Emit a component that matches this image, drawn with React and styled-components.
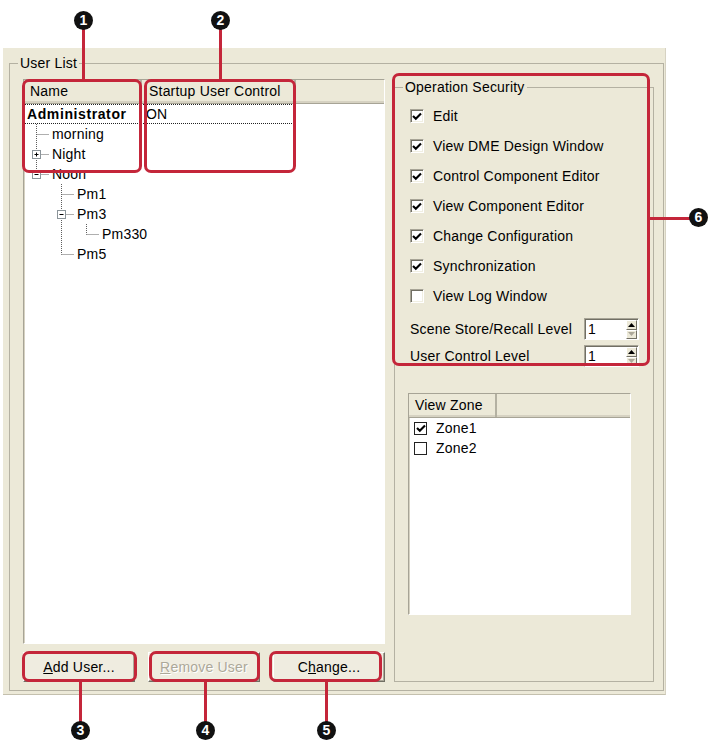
import React from "react";
import styled, { createGlobalStyle, css } from "styled-components";

const users = [
  { name: "Administrator", bold: true, startup: "ON", guides: [], focused: true },
  { name: "morning", guides: ["tee"] },
  { name: "Night", guides: ["tee"], expander: "plus" },
  { name: "Noon", guides: ["elbow"], expander: "minus" },
  { name: "Pm1", guides: ["blank", "tee"] },
  { name: "Pm3", guides: ["blank", "tee"], expander: "minus" },
  { name: "Pm330", guides: ["blank", "pipe", "elbow"] },
  { name: "Pm5", guides: ["blank", "elbow"] },
];

const permissions = [
  { label: "Edit", checked: true },
  { label: "View DME Design Window", checked: true },
  { label: "Control Component Editor", checked: true },
  { label: "View Component Editor", checked: true },
  { label: "Change Configuration", checked: true },
  { label: "Synchronization", checked: true },
  { label: "View Log Window", checked: false },
];

const zones = [
  { name: "Zone1", checked: true },
  { name: "Zone2", checked: false },
];

// annotation overlay (callout frames, leader lines, numbered badges)
const callouts = [
  { x: 22, y: 79, w: 120, h: 94 },
  { x: 144, y: 79, w: 152, h: 94 },
  { x: 392, y: 73, w: 258, h: 293 },
  { x: 22, y: 651, w: 115, h: 31 },
  { x: 149, y: 651, w: 111, h: 31 },
  { x: 269, y: 651, w: 113, h: 31 },
];

const leaders = [
  { x: 82, y: 28, w: 3, h: 51 },
  { x: 219, y: 28, w: 3, h: 51 },
  { x: 650, y: 217, w: 42, h: 3 },
  { x: 79, y: 682, w: 3, h: 42 },
  { x: 204, y: 682, w: 3, h: 42 },
  { x: 325, y: 682, w: 3, h: 42 },
];

const badges = [
  { x: 83, y: 21, n: "1" },
  { x: 220, y: 21, n: "2" },
  { x: 698, y: 218, n: "6" },
  { x: 80, y: 731, n: "3" },
  { x: 205, y: 731, n: "4" },
  { x: 326, y: 731, n: "5" },
];

function TreeGuide({ kind, expander }) {
  return (
    <GuideSvg width="25" height="20" viewBox="0 0 25 20">
      {(kind === "tee" || kind === "pipe") && (
        <line x1="9.5" y1="0" x2="9.5" y2="20" />
      )}
      {kind === "elbow" && <line x1="9.5" y1="0" x2="9.5" y2="10.5" />}
      {(kind === "tee" || kind === "elbow") && (
        <line x1="9.5" y1="10.5" x2="22" y2="10.5" />
      )}
      {expander && (
        <g className="expander">
          <rect x="5.5" y="6.5" width="8" height="8" />
          <line x1="7.5" y1="10.5" x2="11.5" y2="10.5" />
          {expander === "plus" && <line x1="9.5" y1="8.5" x2="9.5" y2="12.5" />}
        </g>
      )}
    </GuideSvg>
  );
}

function Check({ checked, flat }) {
  return (
    <CheckBox $flat={flat}>
      {checked && (
        <svg width="10" height="9" viewBox="0 0 10 9">
          <path d="M1 4 L3.8 6.8 L9 1.4" fill="none" stroke="#000" strokeWidth="2.1" />
        </svg>
      )}
    </CheckBox>
  );
}

function SpinBox({ value }) {
  return (
    <Spin>
      <SpinValue>{value}</SpinValue>
      <SpinButtons>
        <SpinButton>
          <svg width="7" height="4" viewBox="0 0 7 4">
            <path d="M0 4 L3.5 0 L7 4 Z" fill="#000" />
          </svg>
        </SpinButton>
        <SpinButton>
          <svg width="7" height="4" viewBox="0 0 7 4">
            <path d="M0 0 L3.5 4 L7 0 Z" fill="#aca899" />
          </svg>
        </SpinButton>
      </SpinButtons>
    </Spin>
  );
}

export default function App() {
  return (
    <Page>
      <GlobalStyle />
      <Dialog>
        <UserListBox>
          <Legend $offset={-5}>User List</Legend>
          <Columns>
            <LeftColumn>
              <TreeList>
                <HeaderRow>
                  <HeaderCell $w={118} $pad={6}>Name</HeaderCell>
                  <HeaderCell $w={154} $pad={7}>Startup User Control</HeaderCell>
                  <HeaderCell $last />
                </HeaderRow>
                {users.map((u) => (
                  <TreeRow key={u.name} $focused={u.focused}>
                    <NameCell $bold={u.bold}>
                      {u.guides.map((g, i) => (
                        <TreeGuide
                          key={i}
                          kind={g}
                          expander={i === u.guides.length - 1 ? u.expander : null}
                        />
                      ))}
                      <span>{u.name}</span>
                    </NameCell>
                    <StartupCell>{u.startup}</StartupCell>
                  </TreeRow>
                ))}
              </TreeList>
              <ButtonRow>
                <Button>
                  <u>A</u>dd User...
                </Button>
                <Button disabled>
                  <u>R</u>emove User
                </Button>
                <Button>
                  C<u>h</u>ange...
                </Button>
              </ButtonRow>
            </LeftColumn>

            <SecurityBox>
              <Legend $offset={-7}>Operation Security</Legend>
              {permissions.map((p) => (
                <CheckRow key={p.label}>
                  <Check checked={p.checked} />
                  <span>{p.label}</span>
                </CheckRow>
              ))}
              <LevelGrid>
                <LevelRow>
                  <span>Scene Store/Recall Level</span>
                  <SpinBox value="1" />
                </LevelRow>
                <LevelRow>
                  <span>User Control Level</span>
                  <SpinBox value="1" />
                </LevelRow>
              </LevelGrid>
              <ZoneList>
                <HeaderRow>
                  <HeaderCell $w={88} $pad={6}>View Zone</HeaderCell>
                  <HeaderCell $last />
                </HeaderRow>
                {zones.map((z) => (
                  <ZoneRow key={z.name}>
                    <Check checked={z.checked} flat />
                    <span>{z.name}</span>
                  </ZoneRow>
                ))}
              </ZoneList>
            </SecurityBox>
          </Columns>
        </UserListBox>
      </Dialog>

      <Overlay>
        {callouts.map((c, i) => (
          <Callout key={i} $x={c.x} $y={c.y} $w={c.w} $h={c.h} />
        ))}
        {leaders.map((l, i) => (
          <Leader key={i} $x={l.x} $y={l.y} $w={l.w} $h={l.h} />
        ))}
        {badges.map((b) => (
          <Badge key={b.n} $x={b.x} $y={b.y}>
            {b.n}
          </Badge>
        ))}
      </Overlay>
    </Page>
  );
}

const GlobalStyle = createGlobalStyle`
  html, body {
    margin: 0;
    padding: 0;
    background: #fff;
  }
  body {
    font-family: "Liberation Sans", Arial, sans-serif;
    font-size: 14px;
    letter-spacing: 0.2px;
    color: #000;
  }
  * {
    box-sizing: border-box;
  }
`;

const Page = styled.div`
  position: relative;
  width: 717px;
  height: 748px;
  padding: 48px 0 0 3px;
  overflow: hidden;
`;

const Dialog = styled.div`
  width: 663px;
  height: 647px;
  background: #ece9d8;
  padding: 7px 0 0 6px;
  border-right: 1px solid #d6d2c2;
  border-bottom: 1px solid #c4c0ae;
`;

const GroupBox = styled.fieldset`
  margin: 0;
  min-width: 0;
  border: 1px solid #b4b1a2;
  border-radius: 0;
`;

const UserListBox = styled(GroupBox)`
  width: 655px;
  height: 636px;
  padding: 8px 8px 7px 13px;
`;

const Legend = styled.legend`
  padding: 0 2px;
  margin-left: ${(p) => p.$offset}px;
  font-size: 14px;
  line-height: 16px;
`;

const Columns = styled.div`
  display: flex;
  gap: 9px;
  height: 603px;
`;

const LeftColumn = styled.div`
  width: 362px;
  display: flex;
  flex-direction: column;
  gap: 8px;
`;

const TreeList = styled.div`
  flex: 1;
  background: #fff;
  border: 1px solid;
  border-color: #a7a496 #fff #fff #a7a496;
  box-shadow: inset 1px 1px 0 #d6d2c2;
  overflow: hidden;
`;

const HeaderRow = styled.div`
  display: flex;
  height: 24px;
  background: #ece9d8;
  border-bottom: 1px solid #a7a496;
  box-shadow: inset 0 -2px 0 #d6d2c2;
`;

const HeaderCell = styled.div`
  display: flex;
  align-items: center;
  padding-left: ${(p) => p.$pad || 0}px;
  padding-bottom: 2px;
  white-space: nowrap;
  ${(p) =>
    p.$last
      ? css`
          flex: 1;
        `
      : css`
          width: ${p.$w}px;
          flex: none;
          border-right: 2px solid #b4b1a2;
        `}
`;

const TreeRow = styled.div`
  display: grid;
  grid-template-columns: 118px 154px;
  width: 272px;
  height: 20px;
  ${(p) =>
    p.$focused &&
    css`
      outline: 1px dotted #222;
      outline-offset: -1px;
    `}
`;

const NameCell = styled.div`
  display: flex;
  align-items: center;
  padding-left: 3px;
  white-space: nowrap;
  font-weight: ${(p) => (p.$bold ? 700 : 400)};
  letter-spacing: ${(p) => (p.$bold ? "0.6px" : "0.2px")};
`;

const StartupCell = styled.div`
  display: flex;
  align-items: center;
  padding-left: 4px;
`;

const GuideSvg = styled.svg`
  flex: none;
  line {
    stroke: #5e5e5e;
    stroke-width: 1;
    stroke-dasharray: 1 1;
  }
  .expander rect {
    fill: #fff;
    stroke: #8b9499;
  }
  .expander line {
    stroke: #000;
    stroke-dasharray: none;
  }
`;

const ButtonRow = styled.div`
  display: flex;
  justify-content: space-between;
  height: 30px;
`;

const Button = styled.button`
  width: 112px;
  height: 30px;
  padding: 0;
  font-family: "Liberation Sans", Arial, sans-serif;
  font-size: 14px;
  letter-spacing: 0.2px;
  color: #000;
  background: #efece0;
  border: 1px solid;
  border-color: #fff #716f64 #716f64 #fff;
  box-shadow: inset -1px -1px 0 #aca899;

  &:disabled {
    color: #aca899;
    text-shadow: 1px 1px 0 #fff;
  }
`;

const SecurityBox = styled(GroupBox)`
  width: 260px;
  padding: 6px 14px 0 15px;
  display: flex;
  flex-direction: column;
`;

const CheckRow = styled.label`
  display: flex;
  align-items: center;
  gap: 9px;
  height: 30px;
`;

const CheckBox = styled.span`
  flex: none;
  width: 14px;
  height: 14px;
  display: inline-flex;
  align-items: center;
  justify-content: center;
  background: #fff;
  border: 1px solid;
  border-color: #a7a496 #fff #fff #a7a496;
  box-shadow: inset 1px 1px 0 #716f64, inset -1px -1px 0 #f1efe2;

  ${(p) =>
    p.$flat &&
    css`
      width: 13px;
      height: 13px;
      border: 1px solid #222;
      box-shadow: none;
    `}
`;

const LevelGrid = styled.div`
  display: grid;
  gap: 5px;
  margin-top: 7px;
`;

const LevelRow = styled.div`
  display: flex;
  align-items: center;
  justify-content: space-between;
  height: 22px;
`;

const Spin = styled.div`
  display: flex;
  width: 55px;
  height: 22px;
  background: #fff;
  border: 1px solid;
  border-color: #a7a496 #fff #fff #a7a496;
  box-shadow: inset 1px 1px 0 #716f64;
`;

const SpinValue = styled.span`
  flex: 1;
  padding-left: 3px;
  line-height: 20px;
`;

const SpinButtons = styled.div`
  width: 12px;
  display: flex;
  flex-direction: column;
  padding: 1px 1px 0 0;
`;

const SpinButton = styled.div`
  flex: 1;
  display: flex;
  align-items: center;
  justify-content: center;
  background: #ece9d8;
  border: 1px solid;
  border-color: #fff #716f64 #716f64 #fff;
`;

const ZoneList = styled.div`
  width: 223px;
  height: 222px;
  margin: 26px 0 0 -2px;
  background: #fff;
  border: 1px solid;
  border-color: #a7a496 #fff #fff #a7a496;
  box-shadow: inset 1px 1px 0 #d6d2c2;
`;

const ZoneRow = styled.div`
  display: flex;
  align-items: center;
  gap: 9px;
  height: 20px;
  padding-left: 5px;
`;

const Overlay = styled.div`
  position: absolute;
  inset: 0;
  pointer-events: none;
`;

const Callout = styled.div`
  position: absolute;
  left: ${(p) => p.$x}px;
  top: ${(p) => p.$y}px;
  width: ${(p) => p.$w}px;
  height: ${(p) => p.$h}px;
  border: 3px solid #c4263a;
  border-radius: 7px;
`;

const Leader = styled.div`
  position: absolute;
  left: ${(p) => p.$x}px;
  top: ${(p) => p.$y}px;
  width: ${(p) => p.$w}px;
  height: ${(p) => p.$h}px;
  background: #c4263a;
`;

const Badge = styled.div`
  position: absolute;
  left: ${(p) => p.$x - 9}px;
  top: ${(p) => p.$y - 10}px;
  width: 19px;
  height: 19px;
  border-radius: 50%;
  background: #111;
  color: #fff;
  font-family: "Liberation Sans", Arial, sans-serif;
  font-weight: 700;
  font-size: 14px;
  line-height: 19px;
  text-align: center;
  letter-spacing: 0;
`;
